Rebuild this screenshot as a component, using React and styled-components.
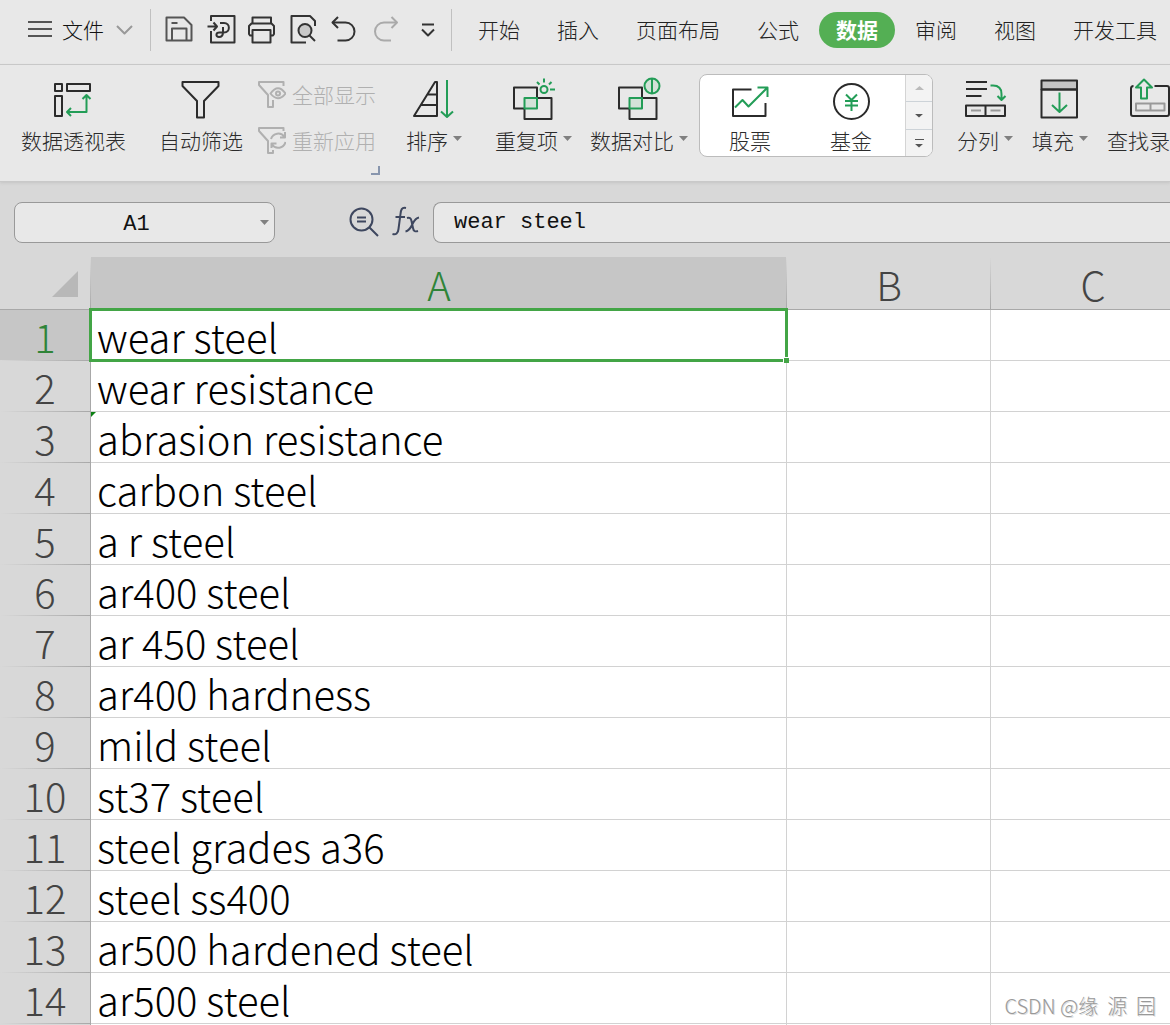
import React from "react";
import styled, { createGlobalStyle, css } from "styled-components";

const GlobalStyle = createGlobalStyle`
  * {
    box-sizing: border-box;
  }
  body {
    margin: 0;
    overflow: hidden;
    font-family: "Noto Sans CJK SC", sans-serif;
    font-weight: 300;
    color: #2b2b2b;
  }
  button,
  input {
    font: inherit;
    color: inherit;
  }
  button {
    padding: 0;
    border: 0;
    background: none;
  }
`;

const Window = styled.div`
  position: relative;
  display: flex;
  flex-direction: column;
  height: 100vh;
  overflow: hidden;
  background: #d8d8d8;
`;

const MenuBar = styled.header`
  display: flex;
  align-items: center;
  height: 65px;
  padding: 0 12px 4px 27px;
  background: #e8e8e8;
  border-bottom: 1px solid #c9c9c9;
`;
const FileButton = styled.button`
  display: flex;
  flex: none;
  align-items: center;
  gap: 9px;
  width: 108px;
  padding-bottom: 2px;
  font-size: 21px;
  line-height: 30px;
  white-space: nowrap;
  color: #111;
`;
const MenuDivider = styled.span`
  flex: none;
  width: 1px;
  height: 42px;
  margin: 0 14px 0 15px;
  background: #c0c0c0;
`;
const QuickTools = styled.div`
  display: flex;
  flex: none;
  gap: 11px;
  margin-right: -5px;
`;
const QuickButton = styled.button`
  flex: none;
  width: 30px;
  height: 30px;
  color: ${(props) => (props.disabled ? "#aaa" : "#333")};
`;
const Tabs = styled.nav`
  display: flex;
  gap: 3px;
  margin-left: -5px;
`;
const Tab = styled.a`
  flex: none;
  height: 36px;
  padding: 0 17px;
  border-radius: 18px;
  font-size: 21px;
  line-height: 34px;
  color: #222;
  text-decoration: none;
  ${(props) =>
    props.$active &&
    css`
      background: #54af54;
      color: #fff;
      font-weight: 700;
    `}
`;

const Ribbon = styled.section`
  position: relative;
  display: flex;
  flex: none;
  height: 117px;
  overflow: hidden;
  background: #e8e8e8;
  border-bottom: 1px solid #c9c9c9;
  box-shadow: 0 1px 3px #c4c4c4;
`;
const Group = styled.div`
  position: relative;
  display: flex;
  flex: none;
  align-items: flex-start;
  gap: ${(props) => props.$gap || 18}px;
  padding: 12px ${(props) => props.$right || 16}px 0 ${(props) => props.$left || 16}px;

  & + &::before {
    content: "";
    position: absolute;
    left: -1px;
    top: 6px;
    width: 1px;
    height: 107px;
    background: #cfcfcf;
  }
  & + & {
    margin-left: 1px;
  }
`;
const BigButton = styled.button`
  display: flex;
  flex: none;
  flex-direction: column;
  align-items: center;
  gap: 7px;
`;
const Label = styled.span`
  display: flex;
  gap: 5px;
  font-size: 21px;
  line-height: 24px;
  white-space: nowrap;
`;
const Caret = styled.i`
  width: 9px;
  height: 5px;
  margin-top: 8px;
  background: ${(props) => props.$color || "#808080"};
  clip-path: polygon(0 0, 100% 0, 50% 100%);
`;
const SmallButtons = styled.div`
  display: flex;
  flex-direction: column;
  gap: 18px;
  padding-top: 4px;
`;
const SmallButton = styled.button`
  display: flex;
  align-items: flex-start;
  gap: 6px;
  height: 28px;
  font-size: 21px;
  line-height: 26px;
  color: #b0b0b0;
`;
const Launcher = styled.button`
  position: absolute;
  right: 9px;
  bottom: 6px;
  width: 9px;
  height: 9px;
  border: solid #8795ad;
  border-width: 0 2px 2px 0;
`;
const Gallery = styled.div`
  display: flex;
  width: 234px;
  height: 83px;
  margin: -3px 0 0 -7px;
  overflow: hidden;
  background: #fff;
  border: 1px solid #bcbcbc;
  border-radius: 8px;
`;
const GalleryItems = styled.div`
  display: flex;
  flex: 1;
  gap: 57px;
  padding: 2px 0 0 28px;
`;
const GalleryScroll = styled.div`
  display: grid;
  grid-template-rows: 26px 28px 1fr;
  width: 27px;
  background: #f3f3f3;
  border-left: 1px solid #d4d4d4;
`;
const ScrollButton = styled.button`
  display: flex;
  flex-direction: column;
  align-items: center;
  justify-content: center;
  gap: 4px;

  & + & {
    border-top: 1px solid #cdd3d8;
  }
  ${Caret} {
    margin: 0;
    height: 4px;
    transform: ${(props) => (props.$up ? "rotate(180deg)" : "none")};
  }
`;
const MoreLine = styled.i`
  width: 9px;
  height: 1px;
  background: #555;
`;

const FormulaBar = styled.section`
  display: flex;
  flex: none;
  align-items: flex-start;
  height: 75px;
  padding: 20px 0 0 14px;
  font-family: "Liberation Mono", "Noto Sans CJK SC", monospace;
  font-size: 22px;
  color: #111;
`;
const NameBox = styled.label`
  display: flex;
  flex: none;
  align-items: center;
  width: 261px;
  height: 41px;
  padding: 0 5px 0 8px;
  background: #e8e8e8;
  border: 1px solid #999;
  border-radius: 8px;

  ${Caret} {
    flex: none;
    margin: 0;
  }
`;
const NameInput = styled.input`
  flex: 1;
  min-width: 0;
  padding: 4px 10px 0 0;
  border: 0;
  outline: 0;
  background: none;
  text-align: center;
`;
const FormulaTools = styled.div`
  display: flex;
  flex: none;
  gap: 13px;
  margin: 4px 11px 0 74px;
  color: #3e475f;
`;
const ToolButton = styled.button`
  width: 30px;
  height: 32px;
`;
const FormulaInput = styled.input`
  flex: 1;
  min-width: 0;
  height: 41px;
  padding: 0 20px;
  background: #e8e8e8;
  border: 1px solid #999;
  border-right: 0;
  border-radius: 8px 0 0 8px;
  outline: 0;
`;

const GridArea = styled.main`
  flex: 1;
  min-height: 0;
  overflow: hidden;
  background: #fff;
`;
const Sheet = styled.table`
  width: 100%;
  min-width: 1195px;
  table-layout: fixed;
  border-collapse: separate;
  border-spacing: 0;
`;
const Col = styled.col`
  width: ${(props) => props.$width};
`;
const Corner = styled.td`
  padding: 0 13px 12px 0;
  background: linear-gradient(#d8d8d8, #a8a8a8) right / 1px 100% no-repeat #d8d8d8;
  border-bottom: 1px solid #a8a8a8;
  vertical-align: bottom;

  &::after {
    content: "";
    display: block;
    width: 26px;
    height: 26px;
    margin-left: auto;
    background: #b8b8b8;
    clip-path: polygon(100% 0, 100% 100%, 0 100%);
  }
`;
const ColumnHeader = styled.th`
  height: 53px;
  padding: 2px 0 0;
  background: linear-gradient(#d8d8d8, #a8a8a8) right / 1px 100% no-repeat
    ${(props) => (props.$selected ? "#c6c6c6" : "#d8d8d8")};
  border-bottom: 1px solid #a8a8a8;
  font-size: 40px;
  font-weight: 300;
  line-height: 44px;
  color: ${(props) => (props.$selected ? "#2f8438" : "#444")};
`;
const RowHeader = styled.th`
  height: 51px;
  padding: 0;
  background: linear-gradient(90deg, #d8d8d8, #a8a8a8) bottom / 100% 1px no-repeat
    ${(props) => (props.$selected ? "#c6c6c6" : "#d8d8d8")};
  border-right: 1px solid #a8a8a8;
  font-size: 40px;
  font-weight: 300;
  line-height: 44px;
  color: ${(props) => (props.$selected ? "#2f8438" : "#444")};
`;
const Cell = styled.td`
  position: relative;
  height: 51px;
  padding: 2px 0 0 6px;
  border-right: 1px solid #d2d2d2;
  border-bottom: 1px solid #d2d2d2;
  font-size: 40px;
  line-height: 44px;
  white-space: nowrap;
  color: #000;
`;
const Selection = styled.span`
  position: absolute;
  z-index: 1;
  inset: -2px;
  border: 3px solid #43a546;

  &::after {
    content: "";
    position: absolute;
    right: -4px;
    bottom: -4px;
    width: 5px;
    height: 5px;
    background: #43a546;
    box-shadow: -1px -1px 0 #fff;
  }
`;
const TextFlag = styled.span`
  position: absolute;
  left: 0;
  top: 0;
  width: 5px;
  height: 5px;
  background: #0b7f12;
  clip-path: polygon(0 0, 100% 0, 0 100%);
`;
const Watermark = styled.p`
  position: absolute;
  right: 14px;
  bottom: 5px;
  margin: 0;
  font-size: 20px;
  line-height: 28px;
  white-space: pre;
  color: #999;
  text-shadow: 1px 1px 0 #ddd;
`;

const GREEN = "#239d57";

const Icon = ({ w = 44, h = 44, sw = 2, children }) => (
  <svg
    width={w}
    height={h}
    viewBox={`0 0 ${w} ${h}`}
    fill="none"
    stroke="currentColor"
    strokeWidth={sw}
    strokeLinejoin="round"
    display="block"
    aria-hidden="true"
  >
    {children}
  </svg>
);

const quickTools = [
  {
    name: "保存",
    icon: (
      <g stroke="#555">
        <path d="M1.5 2.5H19L26.5 10V25.5H1.5Z" />
        <path d="M7 25V13.5H21.5V25M6.5 8H12.5" />
      </g>
    ),
  },
  {
    name: "输出为PDF",
    icon: (
      <>
        <path d="M5 6V1H28.5V27.5H5V16" />
        <path d="M1.5 11.5H11M7.5 7.5L11 11.5L7.5 15.5" />
        <path d="M14 8H18C24.5 8 24.5 17.5 18 17.5H13.5C9.5 17.5 9.5 22 13 22C17 22 17 19 17 17V12" />
      </>
    ),
  },
  {
    name: "打印",
    icon: (
      <>
        <path d="M5.5 8V2.5H24V8" />
        <path d="M5.5 20.5H3L2 19V11L4.5 8.5H24.5L27 11V19L26 20.5H23.5" />
        <path d="M5.5 15H23.5V27.5H5.5Z" />
      </>
    ),
  },
  {
    name: "打印预览",
    icon: (
      <>
        <path d="M18 27.5H3.5V1H22L27 6V11" />
        <circle cx="17" cy="15.5" r="6.5" fill="#c9c9c9" />
        <path d="M21.5 20.5L27 26" />
      </>
    ),
  },
  {
    name: "撤销",
    icon: (
      <>
        <path d="M3.5 7.5H16.5A9 9 0 0 1 16.5 25.5H8.5" />
        <path d="M9 2L3.5 7.5L9 13" />
      </>
    ),
  },
  {
    name: "恢复",
    disabled: true,
    icon: (
      <>
        <path d="M27 7.5H14A9 9 0 0 0 14 25.5H21" />
        <path d="M21.5 2L27 7.5L21.5 13" />
      </>
    ),
  },
  {
    name: "自定义快速访问工具栏",
    icon: <path d="M11 9.5H23M11 14.5L17 20.5L23 14.5" />,
  },
];

const tabs = ["开始", "插入", "页面布局", "公式", "数据", "审阅", "视图", "开发工具"];

const overlapSquares = (
  <>
    <path d="M12 31.5H2V10.5H25V21" />
    <path d="M25 21H39.5V42H12.5V31.5" />
    <rect x="12.5" y="21" width="12.5" height="10.5" fill="#d3e2d8" stroke={GREEN} />
  </>
);

const icons = {
  pivot: (
    <>
      <path d="M3 7H10V14H3ZM15 7H38V14H15ZM3 19H10V39H3Z" />
      <path stroke={GREEN} d="M34.5 18V35H15M30.5 22L34.5 18L38.5 22M19 31L15 35L19 39" />
    </>
  ),
  filter: <path d="M3.5 5H39.5V9L25 24V40.5H18V24L3.5 9Z" />,
  sort: (
    <>
      <path d="M2 39L23 5H25V39ZM15 17.5H25M9 28H25" />
      <path stroke={GREEN} d="M35 3V40M29 34.5L35 40L41 34.5" />
    </>
  ),
  duplicate: (
    <>
      {overlapSquares}
      <g stroke={GREEN}>
        <circle cx="32" cy="12.5" r="3.5" />
        <path d="M32 1.5V5.5M25 5L27.5 7.5M39.5 5L37 7.5M38 12.5H43" />
      </g>
    </>
  ),
  compare: (
    <>
      {overlapSquares}
      <circle cx="35" cy="9" r="7.5" fill="#d3e2d8" stroke={GREEN} />
      <path d="M35 1.5V16.5" stroke={GREEN} />
    </>
  ),
  stock: (
    <>
      <path d="M23.5 12.5H5V39H37.5V26" />
      <path stroke={GREEN} d="M7 30.5L14.5 23L20.5 29.5L39 11M29.5 10.5H39.5V20" />
    </>
  ),
  fund: (
    <>
      <circle cx="22.5" cy="24.5" r="17.5" />
      <path stroke={GREEN} d="M17 17.5L22.5 23L28 17.5M16 24H29M16 28.5H29M22.5 23V34" />
    </>
  ),
  columns: (
    <>
      <path d="M3 5H24M3 12H24M3 19H18.5M3 28.5H42V39H3ZM22.5 28.5V39" />
      <path stroke="#999" d="M8 33.5H18M27.5 33.5H37.5" />
      <path stroke={GREEN} d="M27.5 8.5H30Q38.5 8.5 38.5 17V22.5M34.5 19L38.5 23L42.5 19" />
    </>
  ),
  fill: (
    <>
      <path fill="#c4c4c4" d="M3.5 3.5H39V12.5H3.5Z" />
      <path d="M3.5 12.5H39V40.5H3.5Z" />
      <path stroke={GREEN} d="M21.5 15.5V35M14 28L21.5 35L29 28" />
    </>
  ),
  lookup: (
    <>
      <path d="M6.5 9Q4 9 4 11.5V37Q4 39 6 39H40Q42 39 42 37V11Q42 9 40 9H27.5" />
      <path stroke="#999" d="M9 26.5H37.5V33.5H9ZM23.5 26.5V33.5" />
      <path stroke={GREEN} d="M17 2.5L25 10.5H20V21.5H14V10.5H9Z" />
    </>
  ),
  showAll: (
    <>
      <path d="M25.5 5V1H1V4L10 14V26H15V19" />
      <path d="M12.500 12.500Q20 2 27.500 12.500Q20 22 12.500 12.500Z" />
      <circle cx="20" cy="12.5" r="2" />
    </>
  ),
  reapply: (
    <>
      <path d="M25.5 4V1H1V4L10 14V26H15V23" />
      <path d="M13 12A7.5 7.5 0 0 1 26.5 10M27.5 15A7.5 7.5 0 0 1 14 17.5M27 5V10.5H22M13.5 21V16.5H18.5" />
    </>
  ),
};

const RibbonButton = ({ icon, label, menu }) => (
  <BigButton type="button">
    <Icon>{icons[icon]}</Icon>
    <Label>
      {label}
      {menu && <Caret />}
    </Label>
  </BigButton>
);

const rows = [
  "wear steel",
  "wear resistance",
  "abrasion resistance",
  "carbon steel",
  "a r steel",
  "ar400 steel",
  "ar 450 steel",
  "ar400 hardness",
  "mild steel",
  "st37 steel",
  "steel grades a36",
  "steel ss400",
  "ar500 hardened steel",
  "ar500 steel",
];

const App = () => (
  <Window>
    <GlobalStyle />
    <MenuBar>
      <FileButton type="button">
        <Icon w={26} h={24}>
          <path stroke="#555" d="M1 5H25M1 12H25M1 19H25" />
        </Icon>
        文件
        <Icon w={20} h={20}>
          <path stroke="#999" d="M4 7L11.500 14.500L19 7" />
        </Icon>
      </FileButton>
      <MenuDivider />
      <QuickTools>
        {quickTools.map((tool) => (
          <QuickButton key={tool.name} type="button" aria-label={tool.name} disabled={tool.disabled}>
            <Icon w={30} h={30}>
              {tool.icon}
            </Icon>
          </QuickButton>
        ))}
      </QuickTools>
      <MenuDivider />
      <Tabs>
        {tabs.map((tab) => (
          <Tab key={tab} href="#" $active={tab === "数据"}>
            {tab}
          </Tab>
        ))}
      </Tabs>
    </MenuBar>

    <Ribbon>
      <Group $left={21}>
        <RibbonButton icon="pivot" label="数据透视表" />
      </Group>
      <Group $gap={15} $right={13}>
        <RibbonButton icon="filter" label="自动筛选" />
        <SmallButtons>
          <SmallButton type="button" disabled>
            <Icon w={28} h={28}>{icons.showAll}</Icon>
            全部显示
          </SmallButton>
          <SmallButton type="button" disabled>
            <Icon w={28} h={28}>{icons.reapply}</Icon>
            重新应用
          </SmallButton>
        </SmallButtons>
        <Launcher type="button" aria-label="高级筛选" />
      </Group>
      <Group>
        <RibbonButton icon="sort" label="排序" menu />
      </Group>
      <Group $right={7}>
        <RibbonButton icon="duplicate" label="重复项" menu />
        <RibbonButton icon="compare" label="数据对比" menu />
        <Gallery>
          <GalleryItems>
            <RibbonButton icon="stock" label="股票" />
            <RibbonButton icon="fund" label="基金" />
          </GalleryItems>
          <GalleryScroll>
            <ScrollButton type="button" aria-label="向上" $up>
              <Caret $color="#bbb" />
            </ScrollButton>
            <ScrollButton type="button" aria-label="向下">
              <Caret $color="#555" />
            </ScrollButton>
            <ScrollButton type="button" aria-label="更多">
              <MoreLine />
              <Caret $color="#555" />
            </ScrollButton>
          </GalleryScroll>
        </Gallery>
      </Group>
      <Group $gap={19}>
        <RibbonButton icon="columns" label="分列" menu />
        <RibbonButton icon="fill" label="填充" menu />
        <RibbonButton icon="lookup" label="查找录入" />
      </Group>
    </Ribbon>

    <FormulaBar>
      <NameBox>
        <NameInput aria-label="名称框" defaultValue="A1" />
        <Caret />
      </NameBox>
      <FormulaTools>
        <ToolButton type="button" aria-label="浏览公式结果">
          <Icon w={30} h={32}>
            <circle cx="12.5" cy="13.5" r="11" />
            <path d="M20.5 21.5L29 30M8 11.5H17M8 15.5H17" />
          </Icon>
        </ToolButton>
        <ToolButton type="button" aria-label="插入函数">
          <Icon w={30} h={32}>
            <path d="M14 2C9.5 1 9 4 8.5 8L6.5 23C6 27.5 4 29 0.5 28M3.5 11H13" />
            <path d="M15 12C18 11 19 12.5 19.5 15L21 22C21.5 25 23 26 26 25M27 11.5C24 12 22.5 14 20.5 18C18.5 22.5 17 25 13.5 25.5" />
          </Icon>
        </ToolButton>
      </FormulaTools>
      <FormulaInput aria-label="编辑栏" defaultValue="wear steel" />
    </FormulaBar>

    <GridArea>
      <Sheet>
        <colgroup>
          <Col $width="91px" />
          <Col $width="696px" />
          <Col $width="204px" />
          <Col $width="auto" />
        </colgroup>
        <thead>
          <tr>
            <Corner />
            <ColumnHeader scope="col" $selected>A</ColumnHeader>
            <ColumnHeader scope="col">B</ColumnHeader>
            <ColumnHeader scope="col">C</ColumnHeader>
          </tr>
        </thead>
        <tbody>
          {rows.map((text, i) => (
            <tr key={text}>
              <RowHeader scope="row" $selected={i === 0}>{i + 1}</RowHeader>
              <Cell>
                {text}
                {i === 0 && <Selection />}
                {i === 2 && <TextFlag />}
              </Cell>
              <Cell />
              <Cell />
            </tr>
          ))}
          <tr>
            <RowHeader />
            <Cell />
            <Cell />
            <Cell />
          </tr>
        </tbody>
      </Sheet>
    </GridArea>
    <Watermark>CSDN @缘  源  园</Watermark>
  </Window>
);

export default App;
